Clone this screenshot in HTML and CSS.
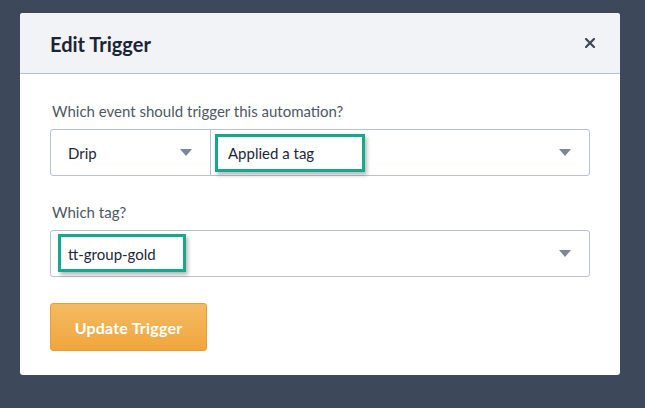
FILE: index.html
```html
<!DOCTYPE html>
<html lang="en">
<head>
<meta charset="utf-8">
<title>Edit Trigger</title>
<link rel="stylesheet" href="styles.css">
</head>
<body>
<div class="modal">
  <div class="modal-header">
    <h2 class="modal-title">Edit Trigger</h2>
    <button class="close" aria-label="Close">
      <svg width="10" height="10" viewBox="0 0 10 10"><path d="M1 1 L9 9 M9 1 L1 9" stroke="#3f4756" stroke-width="2.2" stroke-linecap="square"/></svg>
    </button>
  </div>
  <div class="modal-body">
    <div class="field">
      <label class="label">Which event should trigger this automation?</label>
      <div class="select-group">
        <div class="select select-provider">
          <span class="value">Drip</span>
          <span class="caret"></span>
        </div>
        <div class="select select-event">
          <span class="value">Applied a tag</span>
          <span class="caret"></span>
          <span class="highlight highlight-event"></span>
        </div>
      </div>
    </div>
    <div class="field">
      <label class="label">Which tag?</label>
      <div class="select select-tag">
        <span class="value">tt-group-gold</span>
        <span class="caret"></span>
        <span class="highlight highlight-tag"></span>
      </div>
    </div>
    <button class="btn-primary">Update Trigger</button>
  </div>
</div>
</body>
</html>
```
FILE: styles.css
```css
* { box-sizing: border-box; }
html, body { margin: 0; padding: 0; }
body {
  background: #3d495b;
  width: 645px;
  height: 408px;
  font-family: Lato, "Open Sans", "Liberation Sans", sans-serif;
  color: #1e2738;
  padding: 13px 0 0 20px;
}
.modal {
  width: 600px;
  height: 362px;
  background: #ffffff;
  border-radius: 3px;
  overflow: hidden;
}
.modal-header {
  height: 61px;
  background: #f2f3f7;
  border-bottom: 1px solid #b3bfd6;
  display: flex;
  align-items: center;
  justify-content: space-between;
  padding: 0 25px 0 30px;
}
.modal-title {
  margin: 0;
  font-size: 20px;
  font-weight: 700;
  color: #1b2435;
  padding-top: 2px;
}
.close {
  border: 0;
  background: transparent;
  padding: 0;
  width: 10px;
  height: 10px;
  display: flex;
  cursor: pointer;
}
.modal-body {
  padding: 27px 30px 0 30px;
}
.field { margin-bottom: 26px; }
.label {
  display: block;
  font-size: 15px;
  line-height: 20px;
  color: #4f5763;
  margin-bottom: 8px;
  padding-left: 2px;
}
.select-group {
  display: flex;
  height: 47px;
  border: 1px solid #b7c2d8;
  border-radius: 3px;
}
.select {
  position: relative;
  display: flex;
  align-items: center;
  justify-content: space-between;
  font-size: 15px;
  color: #1e2738;
}
.select-provider {
  width: 160px;
  padding: 0 18px 0 17px;
  border-right: 1px solid #b7c2d8;
}
.select-event {
  flex: 1;
  padding: 0 18px 0 17px;
}
.select-tag {
  height: 47px;
  margin-top: 1px;
  border: 1px solid #b7c2d8;
  border-radius: 3px;
  padding: 0 18px 0 17px;
}
.caret {
  width: 0;
  height: 0;
  border-left: 6px solid transparent;
  border-right: 6px solid transparent;
  border-top: 7px solid #7d8799;
}
.highlight {
  position: absolute;
  border: 3px solid #13a98a;
  box-shadow: 2px 3px 4px rgba(0, 0, 0, 0.28);
  pointer-events: none;
}
.highlight-event {
  left: 4px;
  top: 4px;
  width: 150px;
  height: 38px;
}
.highlight-tag {
  left: 7px;
  top: 3px;
  width: 128px;
  height: 38px;
}
.btn-primary {
  display: block;
  width: 157px;
  height: 48px;
  border: 1px solid #e99d36;
  border-radius: 3px;
  background: linear-gradient(#f4bb63, #f0a63d);
  color: #ffffff;
  font-family: Lato, "Open Sans", "Liberation Sans", sans-serif;
  font-size: 16px;
  letter-spacing: 0.2px;
  font-weight: 700;
  padding: 0;
  margin-top: 0;
}
```
